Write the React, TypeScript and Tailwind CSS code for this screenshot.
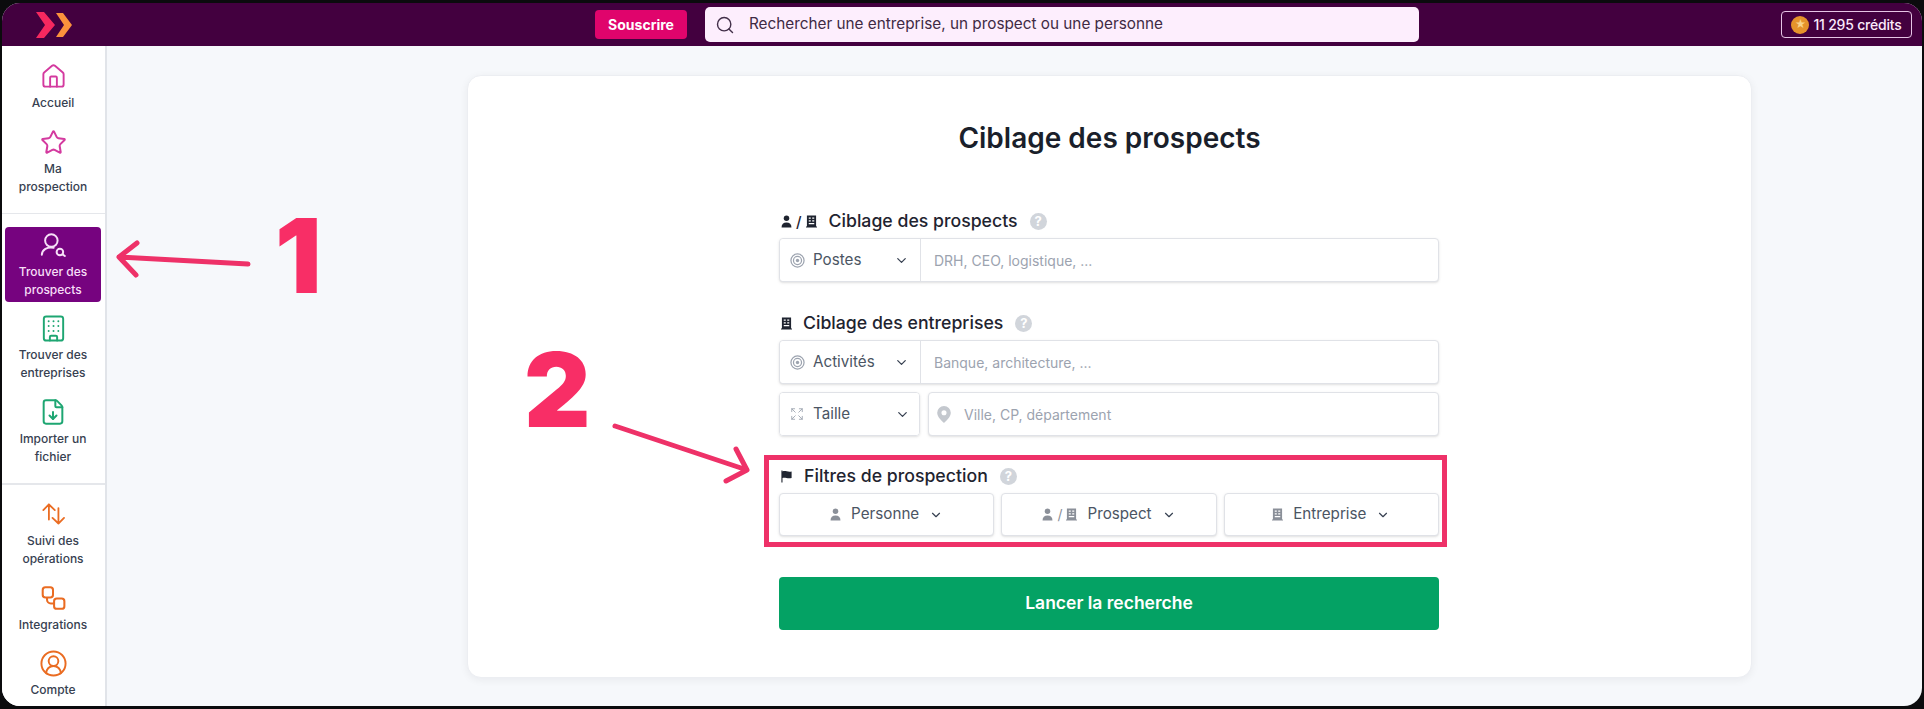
import { Building, ChevronDown, CircleUserRound, Expand, FileDown, Home, Search, Star } from "lucide-react";
import type { ReactNode } from "react";

function PersonIcon({ className }: { className: string }) {
  return (
    <svg viewBox="0 0 12 14" className={className} fill="currentColor" aria-hidden="true">
      <circle cx="6" cy="3.4" r="3" />
      <path d="M0.6 13.5c0-3.4 2-5.4 5.4-5.4s5.400 2 5.400 5.400z" />
    </svg>
  );
}

function BuildingIcon({ className }: { className: string }) {
  return (
    <svg viewBox="0 0 12 14" className={className} aria-hidden="true">
      <path fill="currentColor" fillRule="evenodd" d="M1 0.500h10v12h1v1H0v-1h1zM3 2.500v1.500h2.200V2.500zM6.800 2.500v1.500H9V2.500zM3 5.500V7h2.200V5.500zM6.800 5.500V7H9V5.500zM3 8.500V10h6V8.500z" />
    </svg>
  );
}

function TargetIcon() {
  return (
    <svg viewBox="0 0 16 16" className="h-[15px] w-[15px] text-[#9ca3af]" fill="none" stroke="currentColor" aria-hidden="true">
      <circle cx="8" cy="8" r="7" strokeWidth="1.300" />
      <circle cx="8" cy="8" r="4.300" strokeWidth="1.300" />
      <circle cx="8" cy="8" r="1.800" fill="currentColor" stroke="none" />
    </svg>
  );
}

function HelpDot() {
  return (
    <span className="ml-3 flex h-[17px] w-[17px] items-center justify-center rounded-full bg-[#d1d5db] text-[13px] font-bold leading-none text-white">
      ?
    </span>
  );
}

function LinkedSquares() {
  return (
    <svg viewBox="0 0 24 24" className="h-[26px] w-[26px]" fill="none" stroke="currentColor" strokeWidth="1.900" aria-hidden="true">
      <rect x="2.500" y="2" width="9.500" height="9.500" rx="2.500" />
      <rect x="13" y="12.500" width="9.500" height="9.500" rx="2.500" />
      <path d="M6.500 11.500v2a3.500 3.500 0 0 0 3.500 3.500h3" />
    </svg>
  );
}

function ProspectSearchIcon() {
  return (
    <svg viewBox="-3 -3 78 73" className="h-[24px] w-[26px]" fill="none" stroke="currentColor" strokeWidth="6" strokeLinecap="round" aria-hidden="true">
      <circle cx="31" cy="20" r="19" />
      <path d="M2 63C3 48 18 38 38 42" />
      <circle cx="57" cy="55" r="10" />
      <path d="M65 62l7 5" />
    </svg>
  );
}

function TransferIcon() {
  return (
    <svg viewBox="-3 -3 70 66" className="h-[22px] w-[23px]" fill="none" stroke="currentColor" strokeWidth="5.500" strokeLinecap="round" strokeLinejoin="round" aria-hidden="true">
      <path d="M18 47V1M1 18L18 1L36 18" />
      <path d="M47 12V59M29 42L47 59L64 42" />
    </svg>
  );
}

function NavItem({ icon, label, color, active }: { icon: ReactNode; label: ReactNode; color: string; active?: boolean }) {
  return (
    <div className={`ml-[3px] mr-[4px] flex flex-col items-center rounded-[4px] pb-[3px] pt-[5px] ${active ? "-mb-px bg-[#76037f]" : ""}`}>
      <div className={`flex h-[26px] items-center justify-center ${color}`}>{icon}</div>
      <div className={`mt-[5px] text-center text-[12px] font-medium leading-[18px] ${active ? "text-[#f6dff7]" : "text-[#374151]"}`}>{label}</div>
    </div>
  );
}

function Sidebar() {
  return (
    <aside className="flex w-[105px] shrink-0 flex-col border-r-2 border-[#e1e4e9] bg-white">
      <div className="flex flex-col gap-[9px] border-b border-[#e5e7eb] pb-[14px] pt-[12px]">
        <NavItem icon={<Home size={27} strokeWidth={1.700} />} label="Accueil" color="text-[#d43a9f]" />
        <NavItem icon={<Star size={27} strokeWidth={1.800} />} label={<>Ma<br />prospection</>} color="text-[#d43a9f]" />
      </div>
      <div className="flex flex-col gap-[9px] border-b-2 border-[#e5e7eb] pb-[14px] pt-[13px]">
        <NavItem active icon={<ProspectSearchIcon />} label={<>Trouver des<br />prospects</>} color="text-[#f6dff7]" />
        <NavItem icon={<Building size={29} strokeWidth={1.600} />} label={<>Trouver des<br />entreprises</>} color="text-[#1ea672]" />
        <NavItem icon={<FileDown size={28} strokeWidth={1.700} />} label={<>Importer un<br />fichier</>} color="text-[#1ea672]" />
      </div>
      <div className="flex flex-col gap-[9px] pt-[11px]">
        <NavItem icon={<TransferIcon />} label={<>Suivi des<br />opérations</>} color="text-[#ea6c22]" />
        <NavItem icon={<LinkedSquares />} label="Integrations" color="text-[#ea6c22]" />
        <div className="-mt-px">
          <NavItem icon={<CircleUserRound size={29} strokeWidth={1.600} />} label="Compte" color="text-[#ea6c22]" />
        </div>
      </div>
    </aside>
  );
}

function Header() {
  return (
    <header className="flex h-[43px] shrink-0 items-center bg-[#43003f]">
      <div className="w-[593px] shrink-0 pl-[34px]">
        <svg viewBox="0 0 36 26" className="h-[26px] w-[36px]" aria-hidden="true">
          <polygon points="0,0 8,0 19,13 8,26 0,26 9,13" fill="#f5285f" />
          <polygon points="20,1 27,1 36,13 27,25 20,25 28,13" fill="#fb923c" />
        </svg>
      </div>
      <button className="flex h-[29px] w-[92px] items-center justify-center rounded-[4px] bg-[#e0046c] text-[14px] font-bold text-white">
        Souscrire
      </button>
      <div className="ml-[18px] flex h-[35px] w-[714px] items-center rounded-[5px] bg-[#fdeefd] pl-[10px] text-[15.300px] text-[#3f2a44]">
        <Search size={20} strokeWidth={1.700} className="text-[#43304a]" />
        <span className="ml-[14px]">Rechercher une entreprise, un prospect ou une personne</span>
      </div>
      <div className="ml-auto mr-[10px] flex h-[27px] w-[131px] items-center justify-center gap-[4px] rounded-[4px] border border-[#e6c5e6] text-[14px] font-medium tracking-[-0.2px] text-[#fbeafb]">
        <span className="flex h-[18px] w-[18px] items-center justify-center rounded-full bg-[#e5932b] text-[11px] leading-none text-[#f9d48a]">★</span>
        11 295 crédits
      </div>
    </header>
  );
}

function SelectBox({ icon, label, className }: { icon: ReactNode; label: string; className: string }) {
  return (
    <div className={`flex w-[141px] shrink-0 items-center bg-white pl-[10px] pr-[11px] text-[15.200px] text-[#4b5563] ${className}`}>
      <span className="flex w-[23px] items-center">{icon}</span>
      <span>{label}</span>
      <ChevronDown size={15} strokeWidth={2} className="ml-auto text-[#374151]" />
    </div>
  );
}

function FilterButton({ icon, label }: { icon: ReactNode; label: string }) {
  return (
    <button className="flex h-[43px] flex-1 items-center justify-center rounded-[4px] border border-[#e0e2e7] bg-white text-[15.200px] text-[#4b5563] shadow-sm">
      <span className="mr-[10px] flex items-center gap-[4px] text-[#8b9099]">{icon}</span>
      {label}
      <ChevronDown size={14} strokeWidth={2} className="ml-[10px] text-[#374151]" />
    </button>
  );
}

function SectionLabel({ icon, label }: { icon: ReactNode; label: string }) {
  return (
    <div className="mb-[5px] flex h-[24px] items-center text-[17.700px] font-medium leading-[24px] text-[#1f2430]">
      <span className="flex items-center text-[#1f2430]">{icon}</span>
      <span>{label}</span>
      <HelpDot />
    </div>
  );
}

function ProspectForm() {
  const rowClass = "flex h-[44px] items-center rounded-[4px] border border-[#e0e2e7] bg-white shadow-sm";

  return (
    <div className="ml-[311px] w-[660px]">
      <SectionLabel
        label="Ciblage des prospects"
        icon={
          <span className="mr-[12px] flex items-center gap-[4px] pl-[2px]">
            <PersonIcon className="h-[13px] w-[11px]" />
            <span className="text-[15px] leading-none">/</span>
            <BuildingIcon className="h-[13px] w-[11px]" />
          </span>
        }
      />
      <div className={rowClass}>
        <SelectBox icon={<TargetIcon />} label="Postes" className="h-[42px] rounded-l-[4px] border-r border-[#e0e2e7]" />
        <span className="pl-[13px] text-[14px] text-[#9ca3af]">DRH, CEO, logistique, ...</span>
      </div>

      <div className="mt-[29px]">
        <SectionLabel label="Ciblage des entreprises" icon={<BuildingIcon className="ml-[2px] mr-[11px] h-[13px] w-[11px]" />} />
      </div>
      <div className={rowClass}>
        <SelectBox icon={<TargetIcon />} label="Activités" className="h-[42px] rounded-l-[4px] border-r border-[#e0e2e7]" />
        <span className="pl-[13px] text-[14px] text-[#9ca3af]">Banque, architecture, ...</span>
      </div>
      <div className="mt-[8px] flex gap-[8px]">
        <div className="w-[141px] shrink-0 overflow-hidden rounded-[4px] border border-[#e0e2e7] shadow-sm">
          <SelectBox icon={<Expand size={14} strokeWidth={1.500} className="text-[#9ca3af]" />} label="Taille" className="h-[42px]" />
        </div>
        <div className={`${rowClass} flex-1 pl-[8px]`}>
          <svg viewBox="0 0 16 20" className="h-[17px] w-[14px] text-[#c4c8ce]" aria-hidden="true">
            <path fill="currentColor" fillRule="evenodd" d="M8 0a8 8 0 0 1 8 8c0 5-5 9-8 12-3-3-8-7-8-12a8 8 0 0 1 8-8zm0 5a3 3 0 1 0 0 6 3 3 0 0 0 0-6z" />
          </svg>
          <span className="pl-[13px] text-[14px] text-[#9ca3af]">Ville, CP, département</span>
        </div>
      </div>

      <div className="relative mt-[28px]">
        <div className="absolute -bottom-[11px] -left-[15px] -right-[8px] -top-[9px] border-[5px] border-[#ee3168]" />
        <SectionLabel
          label="Filtres de prospection"
          icon={
            <svg viewBox="0 0 14 14" className="ml-[1px] mr-[11px] h-[13px] w-[13px]" fill="currentColor" aria-hidden="true">
              <path d="M1.500 0.500h1.200v13H1.500zM2.700 1.500c3-1.300 5.500 1 9.800 0v7c-4.300 1.200-6.800-1-9.800 0z" />
            </svg>
          }
        />
        <div className="flex gap-[7px]">
          <FilterButton icon={<PersonIcon className="h-[13px] w-[11px]" />} label="Personne" />
          <FilterButton
            icon={
              <>
                <PersonIcon className="h-[13px] w-[11px]" />
                <span className="text-[14px] leading-none">/</span>
                <BuildingIcon className="h-[13px] w-[11px]" />
              </>
            }
            label="Prospect"
          />
          <FilterButton icon={<BuildingIcon className="h-[13px] w-[11px]" />} label="Entreprise" />
        </div>
      </div>

      <button className="mt-[41px] flex h-[53px] w-full items-center justify-center rounded-[4px] bg-[#04a264] text-[17.500px] font-semibold text-white">
        Lancer la recherche
      </button>
    </div>
  );
}

export default function App() {
  return (
    <div className="relative h-[709px] w-full bg-[#0b0b0d] px-[2px] py-[3px] font-['Inter',sans-serif]">
      <div className="flex h-full flex-col overflow-hidden rounded-[18px] bg-[#f6f8fb]">
        <Header />
        <div className="flex min-h-0 flex-1">
          <Sidebar />
          <main className="flex-1 pl-[360px] pt-[29px]">
            <div className="h-[603px] w-[1285px] rounded-[14px] border border-[#eceef2] bg-white pt-[44px] shadow-[0_2px_8px_rgba(15,23,42,0.06)]">
              <h1 className="mb-[53px] text-center text-[28px] font-semibold leading-[36px] text-[#1a1f2b]">Ciblage des prospects</h1>
              <ProspectForm />
            </div>
          </main>
        </div>
      </div>

      {/* annotations posees sur la capture */}
      <svg className="pointer-events-none absolute left-0 top-0 h-[709px] w-[1924px]" viewBox="0 0 1924 709" fill="none" stroke="#ee3168" strokeWidth="5" strokeLinecap="round" strokeLinejoin="round" aria-hidden="true">
        <path d="M248 264L119 257M137 243L119 257L136 275" />
        <path d="M615 426L747 470M736 449L747 470L726 481" />
      </svg>
      <span className="absolute left-[275px] top-[194px] text-[103px] font-black leading-[124px] text-[#f82e66]">1</span>
      <span className="absolute left-[524px] top-[328px] text-[103px] font-black leading-[124px] text-[#f82e66]">2</span>
    </div>
  );
}
